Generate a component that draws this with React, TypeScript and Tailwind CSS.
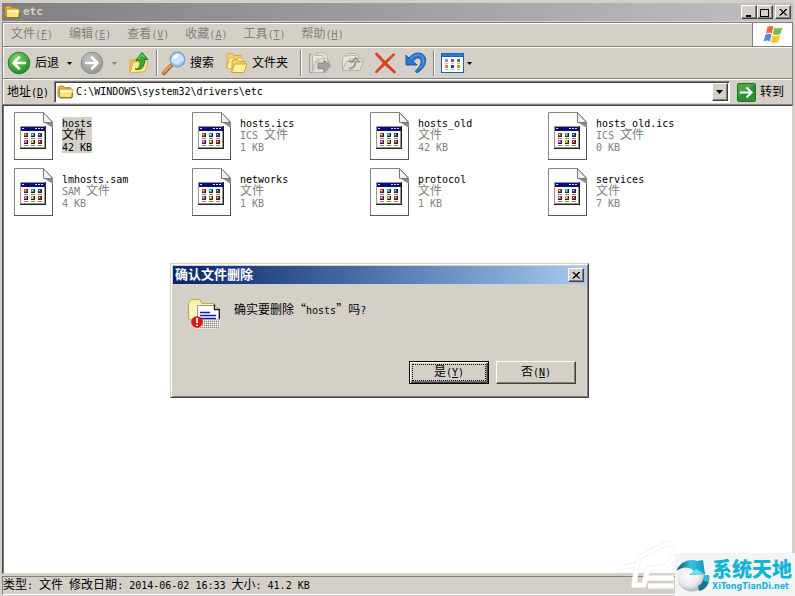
import type { ReactNode } from "react";

const LATIN = /([\x20-\x7e]+)/;

/** Sets western runs at half the width of the Chinese characters around them. */
function Mixed({ text }: { text: string }) {
  return (
    <>
      {text.split(LATIN).map((run, i) =>
        i % 2 ? (
          <span key={i} className="whitespace-pre text-[10px]">{run}</span>
        ) : (
          run
        ),
      )}
    </>
  );
}

function Mnemonic({ text, letter }: { text: string; letter: string }) {
  return (
    <>
      {text}
      <span className="text-[10px]">
        (<u className="underline-offset-1">{letter}</u>)
      </span>
    </>
  );
}

function Folder({ className }: { className: string }) {
  return (
    <svg viewBox="0 0 16 16" className={className} aria-hidden="true">
      <path d="M1 3.5 2.2 2h4l1.3 1.6h5.8V13H1.8L1 12z" fill="#e8b93a" stroke="#a87a10" strokeWidth=".8" />
      <path d="M2.500 5h12.700v7.700l-1 1H2.500z" fill="#fbe27a" stroke="#b08518" strokeWidth=".8" />
      <path d="M3.300 6h11.200v2.500H3.300z" fill="#fff7c4" />
      <path d="M3 13.9h12l.4-5" stroke="#6e5410" strokeWidth=".8" fill="none" />
    </svg>
  );
}

function RoundArrow({ id, dark, light, edge, flip }: { id: string; dark: string; light: string; edge: string; flip?: boolean }) {
  return (
    <svg viewBox="0 0 24 24" className="size-6 shrink-0" aria-hidden="true">
      <defs>
        <radialGradient id={id} cx=".4" cy=".3" r=".75">
          <stop offset="0" stopColor={light} />
          <stop offset="1" stopColor={dark} />
        </radialGradient>
      </defs>
      <circle cx="12" cy="12" r="10.8" fill={`url(#${id})`} stroke={edge} />
      <path
        d="M18 12H7M12 6.5 6.5 12l5.5 5.5"
        transform={flip ? "matrix(-1 0 0 1 24 0)" : undefined}
        fill="none" stroke="#fff" strokeWidth="2.6" strokeLinecap="round" strokeLinejoin="round"
      />
    </svg>
  );
}

function UpFolder() {
  return (
    <svg viewBox="0 0 20 24" className="h-6 w-5" aria-hidden="true">
      <path d="M1 9h5l1.5-2H12v14H1z" fill="#f0cb52" stroke="#c89a28" strokeWidth=".8" />
      <path d="M1 22 4 11h15l-3 9.5z" fill="#fdeb92" stroke="#d2a52f" strokeWidth=".8" />
      <path d="M6 18c4 .5 5.500-3 5-8.500H7L13 1.500l6 7h-3.500C16 15 13 20 6 18z" fill="#36a936" stroke="#187318" strokeWidth=".9" />
      <path d="M9 8.500l4-5 2 2.500" fill="none" stroke="#8ee08a" />
    </svg>
  );
}

function Magnifier() {
  return (
    <svg viewBox="0 0 24 24" className="size-6" aria-hidden="true">
      <path d="M2 22 9 14.500" stroke="#9c5a2a" strokeWidth="4" strokeLinecap="round" />
      <path d="M2 21.500 8.500 14.500" stroke="#f09a50" strokeWidth="2.400" strokeLinecap="round" />
      <circle cx="15.500" cy="8.500" r="7.200" fill="#c6e4fb" stroke="#7aa0cf" strokeWidth="1.500" />
      <path d="M11 8a4.600 4.600 0 0 1 6-4.300c-1 3-3 4.300-6 4.300z" fill="#fff" />
      <path d="M10.500 12a6 6 0 0 0 10-1.500" fill="none" stroke="#95c8f2" strokeWidth="1.500" />
    </svg>
  );
}

function TwoFolders() {
  return (
    <svg viewBox="0 0 22 22" className="size-[22px]" aria-hidden="true">
      <path d="M1 16V2.500L2.500 1.500h4L8 3.500h7V6" fill="#f5d36a" stroke="#d9a93a" />
      <path d="M1 16.500 3.500 6H16v4l-7 6.500z" fill="#fff1a8" stroke="#d9a93a" strokeWidth=".8" />
      <path d="M6 20V9l1.500-1.500h4L13 9.500h6v3" fill="#f5d36a" stroke="#d2a12f" />
      <path d="M5.500 20.500 8.500 12H21l-3 8.500z" fill="#ffef9e" stroke="#d2a12f" />
    </svg>
  );
}

function GreyFolder({ copy }: { copy?: boolean }) {
  return (
    <svg viewBox="0 0 24 22" className="h-[22px] w-6" aria-hidden="true">
      {!copy && <path d="M1.500 2v18.500h3M1.500 2h2" fill="none" stroke="#a0a09c" />}
      <path d={copy ? "M1.500 18V6l2-2h4V1.500h7l3 3V7h5L19 18z" : "M4.500 19V5l2-2h3V1h7l3 3v5h2.500L18.500 20z"} fill="#e8e7e3" stroke="#b2b2ae" />
      <path d="M9 3.500h6v3h3M8 7h7M7 9h5" fill="none" stroke="#b4b4b0" />
      <path d={copy ? "M1.500 18.500 5 9.500h17.500L19 18.500z" : "M4.500 20.500 7 10h14l-3 10.500z"} fill="#dddcd8" stroke="#b2b2ae" />
      {copy ? (
        <path d="M8 16.500c4 0 6.500-2.500 6.500-7.500M10.500 10.500l4-4.500 4 4.500M8 8.500l3 2" fill="none" stroke="#92928f" strokeWidth="1.800" />
      ) : (
        <path d="M10 11.500h6V8l6.500 6-6.500 6v-3.500h-6z" fill="#a3a3a0" stroke="#888885" />
      )}
    </svg>
  );
}

function RedCross() {
  return (
    <svg viewBox="0 0 22 22" className="size-[22px]" aria-hidden="true">
      <path d="M1 2 3 .8 11 9.200 19.500 1.500 21 2.500 12.800 11 22 20l-1.500 1.500L11 13 2.500 21 1 20l8.200-9z" fill="#e2421a" stroke="#c4310f" strokeWidth=".5" />
    </svg>
  );
}

function Undo() {
  return (
    <svg viewBox="0 0 22 22" className="size-[22px]" aria-hidden="true">
      <path
        d="M1 3 4 6C7 2 12 0 16 1.500 23 4 22.500 14.500 12.500 20.500 10.500 20.500 10 19.500 11 18.500 16 14 17.500 9 14.800 6.500 12.500 5 10 6.500 8.500 9.500L12 13H1z"
        fill="#2b78d0" stroke="#15509f" strokeWidth=".9" strokeLinejoin="round"
      />
      <path d="M5.500 7.500C8 3.500 12 2 15.500 3.200 20 5.500 19 12 15 16" fill="none" stroke="#5fa3ea" />
    </svg>
  );
}

function Views() {
  const colors = ["#8e9bb8", "#6c56a8", "#2f8f4a", "#e07a58", "#1e4a9c", "#b3a120"];
  return (
    <svg viewBox="0 0 23 20" className="h-5 w-[23px]" shapeRendering="crispEdges" aria-hidden="true">
      <rect width="23" height="20" fill="#1c62b8" />
      <rect x="1" y="4" width="21" height="15" fill="#fff" />
      <rect x="1" y="1" width="21" height="2" fill="#2f7bd2" />
      {colors.map((c, i) => (
        <g key={c}>
          <rect x={4 + (i % 3) * 6} y={6 + Math.floor(i / 3) * 6} width="3" height="3" fill={c} />
          <rect x={4 + (i % 3) * 6} y={10 + Math.floor(i / 3) * 6} width="3" height="1" fill="#b9bcc6" />
        </g>
      ))}
    </svg>
  );
}

function WindowsFlag() {
  return (
    <svg viewBox="0 0 20 19" className="h-[19px] w-5" aria-hidden="true">
      <path d="M4.500 2C6.500.5 8.500.6 10.500 1.800L8.800 8.600C7 7.500 5 7.500 2.800 8.700z" fill="#ee6a3a" />
      <path d="M11.500 2.500c2.500 1.200 5 1.200 8-.3l-2 6.800c-2.800 1.500-5 1.300-7.700.1z" fill="#7dbb42" />
      <path d="M2.500 9.700c2-1.200 4-1.200 6-.1l-1.700 6.800C5 15.200 3 15.200.5 16.500z" fill="#4c8be0" />
      <path d="M9.500 10.200c2.500 1.200 5 1.200 7.700.1l-1.800 6.700c-2.700 1.400-5 1.300-7.600 0z" fill="#f8c832" />
    </svg>
  );
}

function FileIcon() {
  const dots = ["#c04a28", "#2a9aa8", "#2446a8", "#c83cb8", "#a8a020", "#c02828"];
  return (
    <svg viewBox="0 0 39 48" className="h-12 w-[39px] shrink-0" aria-hidden="true">
      <path d="M.5.5H29.500l9 9.500V47.500H.5z" fill="#fff" stroke="#858585" />
      <path d="M0 47.500H38.500V10" fill="none" stroke="#555" />
      <path d="M29.500 10 39 10v6z" fill="#8a8a8a" />
      <path d="M29.500.5V10.500h9z" fill="#f2f2f2" stroke="#777" />
      <g shapeRendering="crispEdges">
        <rect x="6" y="14" width="26" height="23" fill="#20201c" />
        <rect x="6" y="14" width="25" height="22" fill="#989888" />
        <rect x="7" y="18" width="23" height="17" fill="#fffff6" />
        <rect x="7" y="15" width="24" height="4" fill="#0a0a80" />
        <path d="M8 16h2v1H8zM21 16h2v1h-2zM24 16h2v1h-2zM27 16h2v1h-2z" fill="#d8d8ff" />
        {dots.map((c, i) => {
          const x = 10 + (i % 3) * 7;
          const y = 21 + Math.floor(i / 3) * 7;
          return (
            <g key={c}>
              <rect x={x} y={y} width="4" height="4" fill="#2c2430" />
              <rect x={x} y={y} width="3" height="3" fill={c} />
              <rect x={x + 1} y={y + 1} width="1" height="1" fill="#fff" />
              <rect x={x} y={y + 5} width="4" height="1" fill="#888" />
            </g>
          );
        })}
      </g>
    </svg>
  );
}

function DeleteIcon() {
  return (
    <svg viewBox="0 0 32 32" className="size-8 shrink-0" aria-hidden="true">
      <defs>
        <pattern id="shred" width="2" height="2" patternUnits="userSpaceOnUse">
          <rect width="1" height="1" fill="#858585" />
          <rect x="1" y="1" width="1" height="1" fill="#fff" />
        </pattern>
      </defs>
      <path d="M.5 20V4l3-3.500h8L14 4.500h12V20z" fill="#f8f09c" stroke="#b8ac50" />
      <path d="M2 5h10v15H2z" fill="#fbf6bc" />
      <path d="M9.500 6.500H27l4 4V21H9.500z" fill="#fff" stroke="#999" />
      <path d="M26.500 5.500v5h5V20" fill="none" stroke="#222" strokeWidth="1.400" />
      <path d="M12 13.500h10M12 16.500h16M12 19.500h16" stroke="#1c1cb0" strokeWidth="1.500" />
      <path d="M14 21h18v7l-3 2H8v-3z" fill="url(#shred)" />
      <circle cx="9" cy="23" r="5.800" fill="#e01414" />
      <path d="M9 19v5M9 25.500v1.500" stroke="#fff" strokeWidth="2" />
    </svg>
  );
}

function Caret({ className = "text-black" }: { className?: string }) {
  return (
    <svg viewBox="0 0 5 3" className={`h-[3px] w-[5px] shrink-0 ${className}`} aria-hidden="true">
      <path d="M0 0h5L2.500 3z" fill="currentColor" />
    </svg>
  );
}

const raised =
  "border border-t-white border-l-white border-r-[#404040] border-b-[#404040] bg-[#d4d0c8] shadow-[inset_-1px_-1px_#808080]";

function CaptionButton({ label, children }: { label: string; children: ReactNode }) {
  return (
    <button type="button" aria-label={label} className={`flex h-[14px] w-4 items-center justify-center ${raised}`}>
      <svg viewBox="0 0 10 9" className="h-[9px] w-[10px]" stroke="#000" fill="none" shapeRendering="crispEdges">
        {children}
      </svg>
    </button>
  );
}

const cross = <path d="M1.500 1 8 7.500M2.500 1 9 7.500M8 1 1.500 7.500M9 1 2.500 7.500" strokeWidth="1" shapeRendering="auto" />;

function Separator() {
  return <div className="h-[26px] w-[2px] border-l border-[#808080] bg-white" />;
}

const menus = [
  ["文件", "F"],
  ["编辑", "E"],
  ["查看", "V"],
  ["收藏", "A"],
  ["工具", "T"],
  ["帮助", "H"],
];

const files = [
  { name: "hosts", type: "文件", size: "42 KB", selected: true },
  { name: "hosts.ics", type: "ICS 文件", size: "1 KB" },
  { name: "hosts_old", type: "文件", size: "42 KB" },
  { name: "hosts_old.ics", type: "ICS 文件", size: "0 KB" },
  { name: "lmhosts.sam", type: "SAM 文件", size: "4 KB" },
  { name: "networks", type: "文件", size: "1 KB" },
  { name: "protocol", type: "文件", size: "1 KB" },
  { name: "services", type: "文件", size: "7 KB" },
];

function Dialog() {
  return (
    <section
      role="dialog"
      aria-labelledby="dialog-title"
      className="absolute top-[263px] left-[170px] w-[419px] border border-t-[#d4d0c8] border-l-[#d4d0c8] border-r-[#404040] border-b-[#404040] bg-[#d4d0c8] p-[2px] shadow-[inset_1px_1px_#fff,inset_-1px_-1px_#808080]"
    >
      <header className="flex h-[18px] items-center justify-between bg-linear-to-r from-[#0a246a] to-[#a6caf0] pr-[2px] pl-[2px]">
        <h2 id="dialog-title" className="text-[13px] font-bold text-white">确认文件删除</h2>
        <CaptionButton label="关闭">{cross}</CaptionButton>
      </header>
      <div className="flex gap-[14px] pt-[15px] pl-[15px]">
        <DeleteIcon />
        <p lang="zh-CN" className="mt-1 font-['Noto_Sans_CJK_SC',monospace]">
          确实要删除“<span className="font-['DejaVu_Sans_Mono',monospace] text-[10px]">hosts</span>”吗
          <span className="font-['DejaVu_Sans_Mono',monospace] text-[10px]">?</span>
        </p>
      </div>
      <div className="mt-[30px] mb-[11px] flex justify-end gap-[7px] pr-[10px]">
        <button type="button" className="h-[23px] w-20 border border-black bg-[#d4d0c8] p-[2px] shadow-[inset_1px_1px_#fff,inset_-1px_-1px_#404040,inset_-2px_-2px_#808080]">
          <span className="flex h-full items-center justify-center border border-dotted border-black">
            <span><Mnemonic text="是" letter="Y" /></span>
          </span>
        </button>
        <button type="button" className={`h-[23px] w-20 ${raised}`}>
          <Mnemonic text="否" letter="N" />
        </button>
      </div>
    </section>
  );
}

const house = "M16 24 13 45H23L27 28H42L54 16M27 38H53M27 46H53";

function Watermark() {
  return (
    <aside className="absolute right-0 bottom-0 flex items-end">
      <svg viewBox="0 0 54 56" className="h-14 w-[54px]" fill="none" stroke="#fff" strokeLinejoin="round" aria-hidden="true">
        <path d="M0 28 16 24 19 17 46 3 54 8" stroke="#efefee" strokeWidth="5" />
        <path d="M0 28 16 24 19 17 46 3 54 8" strokeWidth="3.500" />
        <path d={house} stroke="#ededeb" strokeWidth="5.500" />
        <path d={house} strokeWidth="4.500" />
      </svg>
      <div className="flex h-[43px] w-[120px] items-center gap-[2px] bg-[#f3f4f4] pl-px">
        <svg viewBox="0 0 34 36" className="h-9 w-[34px] shrink-0" aria-hidden="true">
          <defs>
            <radialGradient id="ball" cx=".4" cy=".4" r=".65">
              <stop offset="0" stopColor="#fff" />
              <stop offset=".6" stopColor="#e8ebec" />
              <stop offset="1" stopColor="#a4adb1" />
            </radialGradient>
            <linearGradient id="swoosh" x1="0" x2="1">
              <stop offset="0" stopColor="#0b4a5c" />
              <stop offset=".5" stopColor="#35c4e2" />
              <stop offset="1" stopColor="#1798b8" />
            </linearGradient>
          </defs>
          <circle cx="15.500" cy="20.500" r="14" fill="url(#ball)" />
          <path d="M.5 14C4 5 13 1 21 4l6-1 2 14-16 1 5-4C12 9 6 10 .5 14z" fill="url(#swoosh)" />
          <path d="M28 18l5 0c1.500 8-3 15-10 16l-1-5c4-2 6-6 6-11z" fill="#117791" />
          <path d="M28 18l5 0c.5 3 0 5-1 7l-4-1z" fill="#35b8d6" />
          <path d="M14 17l6-5 8 4.500z" fill="#6fe0f4" />
        </svg>
        <div className="text-[#12b5d6]">
          <p className="font-['Noto_Sans_CJK_SC',sans-serif] text-[20px] leading-6 font-black">系统天地</p>
          <p className="font-['DejaVu_Sans',sans-serif] text-[8px] leading-3 font-bold">XiTongTianDi.net</p>
        </div>
      </div>
    </aside>
  );
}

export default function App() {
  return (
    <div className="relative flex min-h-screen flex-col bg-[#d4d0c8] pt-[3px] pr-[2px] pl-[2px] font-['DejaVu_Sans_Mono','Noto_Sans_CJK_SC',monospace] text-[12px] leading-3 text-black">
      <header className="flex h-[18px] items-center bg-linear-to-r from-[#808080] to-[#c0c0c0] pr-[2px] pl-[2px]">
        <Folder className="size-4" />
        <h1 className="ml-[3px] flex-1 text-[11px] font-bold text-[#d4d0c8]">etc</h1>
        <CaptionButton label="最小化"><path d="M2 7.500h5" strokeWidth="2" /></CaptionButton>
        <CaptionButton label="最大化"><path d="M.5 1h8v7h-8zM.5 1.500h8" /></CaptionButton>
        <span className="w-[2px]" />
        <CaptionButton label="关闭">{cross}</CaptionButton>
      </header>

      <div className="mt-px border border-[#808080] shadow-[inset_1px_1px_#fff]">
        <nav className="flex h-6 items-center border-b border-[#808080]">
          {menus.map(([text, letter]) => (
            <button key={letter} type="button" disabled className="px-2 text-[#808080]">
              <Mnemonic text={text} letter={letter} />
            </button>
          ))}
          <div className="ml-auto flex h-[23px] w-10 items-center justify-center border-l border-[#808080] bg-white">
            <WindowsFlag />
          </div>
        </nav>

        <div className="flex h-8 items-center border-t border-b border-t-white border-b-[#808080] pl-1">
          <button type="button" className="flex items-center gap-1">
            <RoundArrow id="back" light="#7fd86a" dark="#1c8a1c" edge="#2a7d2a" />后退
          </button>
          <button type="button" aria-label="后退历史" className="px-2 py-2"><Caret /></button>
          <button type="button" aria-label="前进" disabled>
            <RoundArrow id="forward" light="#c4c4c4" dark="#929292" edge="#8f8f8f" flip />
          </button>
          <button type="button" aria-label="前进历史" disabled className="px-2 py-2"><Caret className="text-[#808080]" /></button>
          <button type="button" aria-label="向上" className="ml-1 mr-[7px]"><UpFolder /></button>
          <Separator />
          <button type="button" className="ml-1 flex items-center gap-1"><Magnifier />搜索</button>
          <button type="button" className="mx-3 flex items-center gap-1"><TwoFolders />文件夹</button>
          <Separator />
          <div className="mx-[6px] flex gap-[9px]">
            <button type="button" aria-label="移至" disabled><GreyFolder /></button>
            <button type="button" aria-label="复制到" disabled><GreyFolder copy /></button>
            <button type="button" aria-label="删除"><RedCross /></button>
            <button type="button" aria-label="撤消"><Undo /></button>
          </div>
          <Separator />
          <button type="button" aria-label="查看" className="ml-[6px] flex items-center gap-[3px]"><Views /><Caret /></button>
        </div>

        <div className="flex h-[25px] items-center border-t border-white pr-2 pl-1">
          <label htmlFor="address" className="mr-[5px] whitespace-nowrap"><Mnemonic text="地址" letter="D" /></label>
          <div className="flex h-[22px] flex-1 items-center border border-t-[#808080] border-l-[#808080] border-r-white border-b-white bg-white pl-[2px] shadow-[inset_1px_1px_#404040]">
            <Folder className="size-4" />
            <input id="address" defaultValue="C:\WINDOWS\system32\drivers\etc" className="ml-[3px] min-w-0 flex-1 text-[10px] outline-none" />
            <button type="button" aria-label="显示地址" className={`mr-px flex h-[18px] w-4 items-center justify-center ${raised}`}>
              <svg viewBox="0 0 7 4" className="h-1 w-[7px]"><path d="M0 0h7L3.500 4z" /></svg>
            </button>
          </div>
          <button type="button" className="ml-[7px] flex items-center gap-1">
            <svg viewBox="0 0 19 19" className="size-[19px]" aria-hidden="true">
              <rect x=".5" y=".5" width="18" height="18" rx="1" fill="#2f8f33" stroke="#1f7424" />
              <path d="M1 1h17L1 14z" fill="#66b95f" opacity=".5" />
              <path d="M3 9.500h11M9.500 4.500l5 5-5 5" fill="none" stroke="#fff" strokeWidth="2.200" />
            </svg>
            转到
          </button>
        </div>
      </div>

      <main className="flex-1 border border-t-[#404040] border-l-[#404040] border-r-[#d4d0c8] border-b-[#d4d0c8] bg-white pt-[6px] pl-[11px] shadow-[inset_1px_0_#808080]">
        <ul className="grid grid-cols-[repeat(auto-fill,178px)] gap-y-2">
          {files.map((f) => (
            <li key={f.name} className="flex gap-[9px]">
              <FileIcon />
              <div className={`mt-[5px] self-start ${f.selected ? "bg-[#d4d0c8]" : "text-[#808080]"}`}>
                <p className="h-3 text-black"><Mixed text={f.name} /></p>
                <p className="h-3"><Mixed text={f.type} /></p>
                <p className="h-3"><Mixed text={f.size} /></p>
              </div>
            </li>
          ))}
        </ul>
      </main>

      <footer className="mt-[2px] mb-px flex h-[19px] items-center border border-t-[#808080] border-l-[#808080] border-r-white border-b-white">
        <p><Mixed text="类型: 文件 修改日期: 2014-06-02 16:33 大小: 41.2 KB" /></p>
      </footer>

      <Dialog />
      <Watermark />
    </div>
  );
}
